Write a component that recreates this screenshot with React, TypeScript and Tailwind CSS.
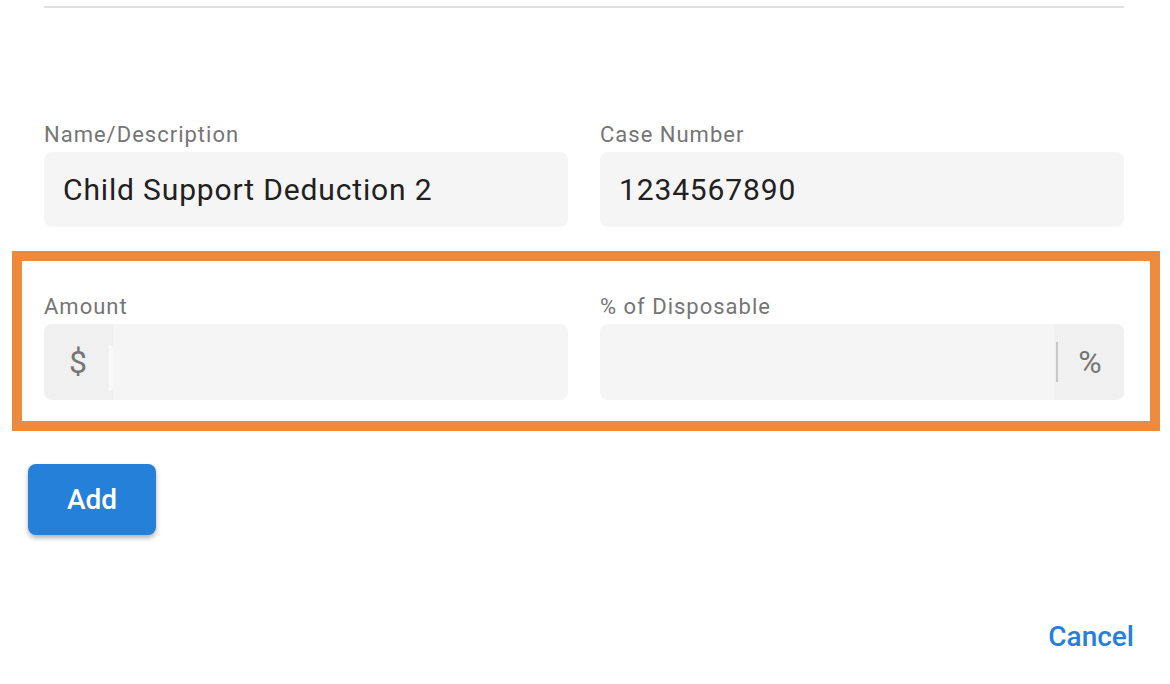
const Label = ({ children }: { children: string }) => (
  <label className="block text-[22px] tracking-[1px] leading-[24px] text-[#757575] mb-[5px]">{children}</label>
);

const TextField = ({ label, value }: { label: string; value: string }) => (
  <div>
    <Label>{label}</Label>
    <div className="h-[75px] rounded-[8px] bg-[#f5f5f5] flex items-center px-[19px] text-[30px] tracking-[0.85px] text-[#212121]">
      {value}
    </div>
  </div>
);

export default function App() {
  return (
    <div className="w-[1170px] h-[684px] bg-white font-['Roboto',sans-serif] overflow-hidden">
      <div className="px-[44px] pt-[6px]">
        <div className="h-[2px] bg-[#e0e0e0] w-[1080px]" />
      </div>

      <div className="grid grid-cols-2 gap-x-[32px] px-[44px] mt-[115px] w-[1168px]">
        <TextField label="Name/Description" value="Child Support Deduction 2" />
        <TextField label="Case Number" value="1234567890" />
      </div>

      <div className="mt-[24px] ml-[12px] w-[1148px] border-[10px] border-[#ee8a3e] pl-[22px] pr-[26px] pt-[34px] pb-[21px] grid grid-cols-2 gap-x-[32px]">
        <div>
          <Label>Amount</Label>
          <div className="h-[76px] rounded-[8px] bg-[#f5f5f5] flex overflow-hidden">
            <div className="w-[69px] bg-[#f0f0f0] flex items-center">
              <span className="flex-1 text-center text-[32px] text-[#757575] pl-[3px]">$</span>
              <div className="w-[4px] h-[44px] mt-[12px] bg-[#f9f9f9]" />
            </div>
            <div className="flex-1" />
          </div>
        </div>
        <div>
          <Label>% of Disposable</Label>
          <div className="h-[76px] rounded-[8px] bg-[#f5f5f5] flex overflow-hidden">
            <div className="flex-1" />
            <div className="w-[70px] bg-[#f0f0f0] flex items-center">
              <div className="w-[2px] h-[40px] bg-[#c8c8c8] ml-[2px]" />
              <span className="flex-1 text-center text-[32px] text-[#757575] pr-[2px]">%</span>
            </div>
          </div>
        </div>
      </div>

      <div className="px-[28px] mt-[33px]">
        <button className="w-[128px] h-[71px] rounded-[8px] bg-[#2580d9] text-white text-[28px] font-medium shadow-[0_3px_5px_rgba(0,0,0,0.3)]">
          Add
        </button>
      </div>

      <div className="flex justify-end pr-[36px] mt-[86px]">
        <span className="text-[28px] leading-[32px] font-medium text-[#2680d9]">Cancel</span>
      </div>
    </div>
  );
}
